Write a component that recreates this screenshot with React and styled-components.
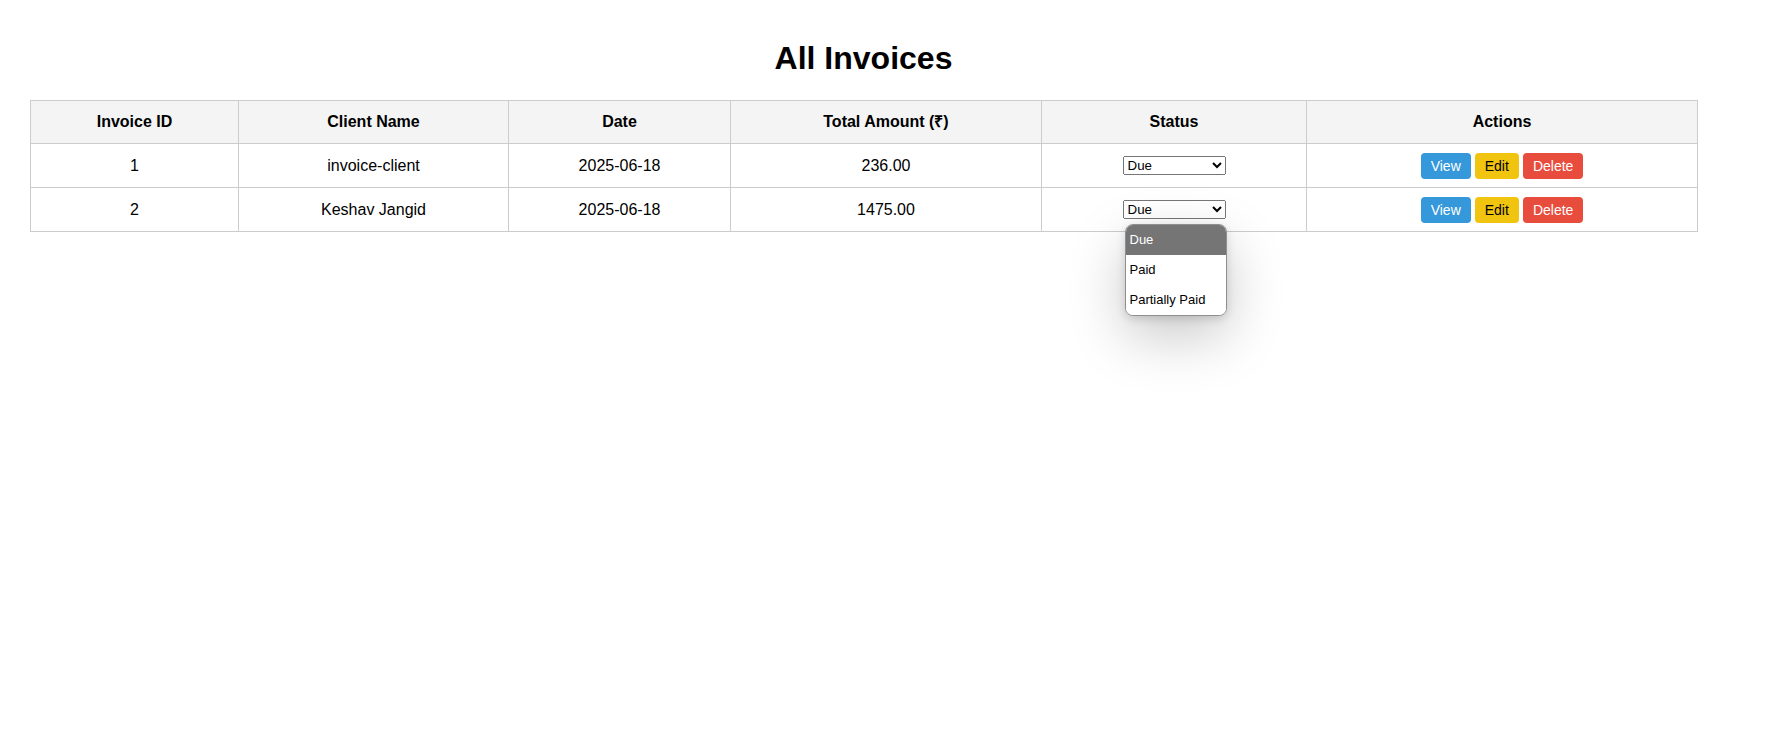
import React from "react";
import styled, { createGlobalStyle } from "styled-components";

const GlobalStyle = createGlobalStyle`
  body {
    margin: 0;
    background: #fff;
    font-family: "Liberation Sans", Arial, sans-serif;
    color: #000;
  }
`;

const Page = styled.div`
  min-height: 729px;
  box-sizing: border-box;
  padding: 40px 71px 0 30px;
`;

const Title = styled.h1`
  margin: 0 0 23px;
  font-size: 32px;
  font-weight: bold;
  text-align: center;
  line-height: normal;
`;

const Table = styled.table`
  width: 1667px;
  table-layout: fixed;
  border-collapse: collapse;
  font-size: 16px;
`;

const Th = styled.th`
  padding: 12px;
  border: 1px solid #ccc;
  background: #f4f4f4;
  text-align: center;
  font-weight: bold;
  line-height: 18px;
`;

const Td = styled.td`
  padding: 8.5px 8px;
  border: 1px solid #ccc;
  text-align: center;
  vertical-align: middle;
`;

const SelectWrap = styled.span`
  position: relative;
  display: inline-block;
  vertical-align: middle;
`;

const StatusSelect = styled.select`
  width: 103px;
  height: 19px;
  font-family: "Liberation Sans", Arial, sans-serif;
  font-size: 13.33px;
  color: #000;
  display: block;
`;

const Popup = styled.div`
  position: absolute;
  top: calc(100% + 5px);
  left: 2px;
  width: 100px;
  border: 1px solid #8f8f8f;
  border-radius: 8px;
  overflow: hidden;
  background: #fff;
  box-shadow: 0 20px 56px rgba(0, 0, 0, 0.22), 0 3px 8px rgba(0, 0, 0, 0.14);
  text-align: left;
  z-index: 10;
`;

const PopupOption = styled.div`
  height: 30px;
  line-height: 30px;
  padding: 0 4px;
  font-size: 13px;
  white-space: nowrap;
  background: ${({ $active }) => ($active ? "#757575" : "#fff")};
  color: ${({ $active }) => ($active ? "#fff" : "#000")};
`;

const Actions = styled.div`
  display: flex;
  justify-content: center;
  gap: 4px;
`;

const ActionButton = styled.button`
  padding: 5px 10px;
  border: none;
  border-radius: 4px;
  font-family: "Liberation Sans", Arial, sans-serif;
  font-size: 14px;
  line-height: 16px;
  cursor: pointer;
  background: ${({ $kind }) =>
    $kind === "view" ? "#3498db" : $kind === "edit" ? "#f1c40f" : "#e74c3c"};
  color: ${({ $kind }) => ($kind === "edit" ? "#000" : "#fff")};
`;

const invoices = [
  { id: 1, client: "invoice-client", date: "2025-06-18", total: "236.00", status: "Due" },
  { id: 2, client: "Keshav Jangid", date: "2025-06-18", total: "1475.00", status: "Due", open: true },
];

const statuses = ["Due", "Paid", "Partially Paid"];
const colWidths = [208, 270, 222, 311, 265, 391];

const App = () => {
  return (
    <Page>
      <GlobalStyle />
      <Title>All Invoices</Title>
      <Table>
        <colgroup>
          {colWidths.map((w, i) => (
            <col key={i} style={{ width: w }} />
          ))}
        </colgroup>
        <thead>
          <tr>
            <Th>Invoice ID</Th>
            <Th>Client Name</Th>
            <Th>Date</Th>
            <Th>Total Amount (₹)</Th>
            <Th>Status</Th>
            <Th>Actions</Th>
          </tr>
        </thead>
        <tbody>
          {invoices.map((inv) => (
            <tr key={inv.id}>
              <Td>{inv.id}</Td>
              <Td>{inv.client}</Td>
              <Td>{inv.date}</Td>
              <Td>{inv.total}</Td>
              <Td>
                <SelectWrap>
                  <StatusSelect defaultValue={inv.status}>
                    {statuses.map((s) => (
                      <option key={s}>{s}</option>
                    ))}
                  </StatusSelect>
                  {inv.open && (
                    <Popup>
                      {statuses.map((s) => (
                        <PopupOption key={s} $active={s === inv.status}>
                          {s}
                        </PopupOption>
                      ))}
                    </Popup>
                  )}
                </SelectWrap>
              </Td>
              <Td>
                <Actions>
                  <ActionButton $kind="view">View</ActionButton>
                  <ActionButton $kind="edit">Edit</ActionButton>
                  <ActionButton $kind="delete">Delete</ActionButton>
                </Actions>
              </Td>
            </tr>
          ))}
        </tbody>
      </Table>
    </Page>
  );
};

export default App;
